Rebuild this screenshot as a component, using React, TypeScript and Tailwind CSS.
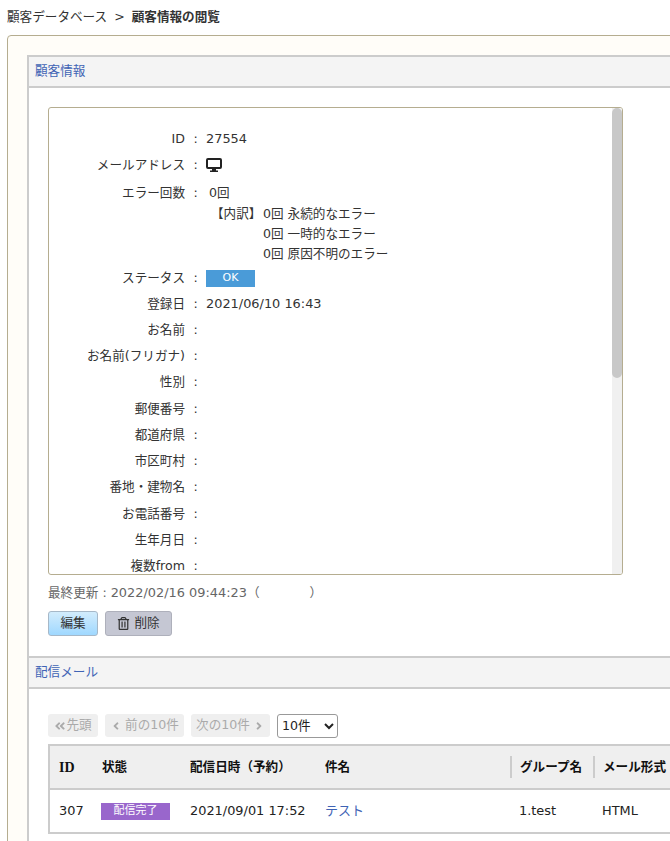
import React from 'react';
import { FaAngleDoubleLeft, FaAngleLeft, FaAngleRight, FaRegTrashAlt } from 'react-icons/fa';

const FONT = '"DejaVu Sans", "Noto Sans CJK JP", sans-serif';

const Row = ({ label, h = 'h-[26px]', children }: { label: string; h?: string; children?: React.ReactNode }) => (
  <div className={`flex items-center ${h}`}>
    <div className="w-[136px] text-right">{label}</div>
    <div className="w-[21px] text-center">:</div>
    <div>{children}</div>
  </div>
);

const emptyRows = ['お名前', 'お名前(フリガナ)', '性別', '郵便番号', '都道府県', '市区町村', '番地・建物名', 'お電話番号', '生年月日', '複数from'];

const SectionHead = ({ title }: { title: string }) => (
  <div className="h-[33px] bg-[#f4f4f4] border-y-2 border-[#cccccc] pl-[6px] flex items-center text-[#3f63b5]">
    {title}
  </div>
);

const NavButton = ({ w, children }: { w: string; children: React.ReactNode }) => (
  <div className={`${w} h-[23px] rounded-[3px] bg-[#efefef] text-[#aaaaaa] flex items-center justify-center`}>
    {children}
  </div>
);

const DesktopIcon = () => (
  <svg width="16" height="14" viewBox="0 0 16 14" className="text-[#222222] block">
    <rect x="1" y="1" width="14" height="9" rx="1" fill="none" stroke="currentColor" strokeWidth="2" />
    <path d="M6 11h4v1.5h2V14H4v-1.5h2z" fill="currentColor" />
  </svg>
);

export default function App() {
  return (
    <div className="w-[670px] h-[841px] overflow-hidden bg-white text-[#333333] text-[12.6px]" style={{ fontFamily: FONT }}>
      <div className="h-[35px] pl-[7px] pt-[8px] leading-[17px]">
        顧客データベース <span className="mx-[3px]">&gt;</span> <span className="font-bold">顧客情報の閲覧</span>
      </div>

      <div className="ml-[7px] w-[700px] h-[900px] border border-[#b5ad90] rounded-tl-[4px] bg-[#fffdf8] pl-[19px] pt-[19px]">
        <div className="bg-white border-l-2 border-[#cccccc] h-full">
          <SectionHead title="顧客情報" />

          <div className="pl-[19px] pt-[19px]">
            <div className="relative w-[575px] h-[468px] border border-[#b5ad90] rounded-[3px] overflow-hidden">
              <div className="pt-[18px]">
                <Row label="ID"><span className="text-[12.9px]">27554</span></Row>
                <Row label="メールアドレス">
                  <DesktopIcon />
                </Row>
                <div className="flex items-center h-[22px] mt-[4px]">
                  <div className="w-[136px] text-right">エラー回数</div>
                  <div className="w-[21px] text-center">:</div>
                  <div className="ml-[3px]">0回</div>
                </div>
                <div className="flex h-[20px] items-center">
                  <div className="ml-[162px] w-[52px]">【内訳】</div>
                  <div>0回 永続的なエラー</div>
                </div>
                <div className="flex h-[20px] items-center">
                  <div className="ml-[214px]">0回 一時的なエラー</div>
                </div>
                <div className="flex h-[20px] items-center">
                  <div className="ml-[214px]">0回 原因不明のエラー</div>
                </div>
                <Row label="ステータス" h="h-[28px] mb-[2px]">
                  <div className="w-[49px] h-[17px] bg-[#4a9bd8] text-white text-[11px] flex items-center justify-center">OK</div>
                </Row>
                <Row label="登録日" h="h-[20px]"><span className="text-[12.9px]">2021/06/10 16:43</span></Row>
                <div className="mt-[3px]">
                  {emptyRows.map((label) => (
                    <Row key={label} label={label} h="h-[26.3px]" />
                  ))}
                </div>
              </div>
              {/* scrollbar is drawn, headless hides the native one */}
              <div className="absolute top-0 right-0 bottom-0 w-[10px] bg-[#f0f0f0]">
                <div className="h-[270px] rounded-[5px] bg-[#c8c8c8]" />
              </div>
            </div>

            <div className="mt-[8px] h-[20px] text-[#666666] flex items-center">
              最終更新 : <span className="text-[12.9px] ml-[4px]">2022/02/16 09:44:23</span>（<span className="w-[50px]" />）
            </div>

            <div className="mt-[8px] flex gap-[7px] h-[25px]">
              <div className="w-[50px] rounded-[3px] border border-[#a6b8c8] bg-gradient-to-b from-[#d2ecfc] to-[#9fd8ff] flex items-center justify-center text-[#333333]">
                編集
              </div>
              <div className="w-[67px] rounded-[3px] border border-[#aeb0bb] bg-[#c5c7d3] flex items-center justify-center gap-[4px] text-[#333333]">
                <FaRegTrashAlt size={13} />
                削除
              </div>
            </div>
          </div>

          <div className="mt-[20px]">
            <SectionHead title="配信メール" />
          </div>

          <div className="pl-[19px] pt-[25px]">
            <div className="flex gap-[7px] items-center h-[23px]">
              <NavButton w="w-[50px]">
                <FaAngleDoubleLeft size={12} />
                先頭
              </NavButton>
              <NavButton w="w-[79px]">
                <FaAngleLeft size={12} className="mr-[3px]" />
                前の10件
              </NavButton>
              <NavButton w="w-[79px]">
                次の10件
                <FaAngleRight size={12} className="ml-[3px]" />
              </NavButton>
              <select className="w-[61px] h-[24px] border border-[#999999] rounded-[3px] bg-white text-[12.6px] text-[#222222]" defaultValue="10">
                <option value="10">10件</option>
              </select>
            </div>

            <table className="mt-[7px] table-fixed border-collapse w-[760px] border-l-2 border-[#cccccc]">
              <colgroup>
                <col className="w-[42px]" />
                <col className="w-[88px]" />
                <col className="w-[135px]" />
                <col className="w-[196px]" />
                <col className="w-[83px]" />
                <col className="w-[216px]" />
              </colgroup>
              <thead>
                <tr className="h-[44px] bg-[#efefef] border-y-2 border-[#cccccc] text-[#111111]">
                  <th className="pl-[9px] text-left" style={{ fontFamily: '"Liberation Serif", serif', fontSize: 14 }}>ID</th>
                  <th className="pl-[11px] text-left">状態</th>
                  <th className="pl-[11px] text-left">配信日時（予約）</th>
                  <th className="pl-[11px] text-left">件名</th>
                  <th className="text-left">
                    <div className="border-l-2 border-[#cccccc] pl-[8px] h-[22px] flex items-center">グループ名</div>
                  </th>
                  <th className="text-left">
                    <div className="border-l-2 border-[#cccccc] pl-[8px] h-[22px] flex items-center">メール形式</div>
                  </th>
                </tr>
              </thead>
              <tbody>
                <tr className="h-[44px] border-b-2 border-[#cccccc] text-[#222222]">
                  <td className="pl-[9px] text-[12.9px]">307</td>
                  <td className="pl-[10px]">
                    <div className="w-[69px] h-[17px] bg-[#9966cc] text-white text-[11px] flex items-center justify-center">配信完了</div>
                  </td>
                  <td className="pl-[11px] text-[12.9px]">2021/09/01 17:52</td>
                  <td className="pl-[11px] text-[#3f63b5] text-[13px]">テスト</td>
                  <td className="pl-[9px] text-[12.9px]">1.test</td>
                  <td className="pl-[9px] text-[12.9px]">HTML</td>
                </tr>
              </tbody>
            </table>
          </div>
        </div>
      </div>
    </div>
  );
}
